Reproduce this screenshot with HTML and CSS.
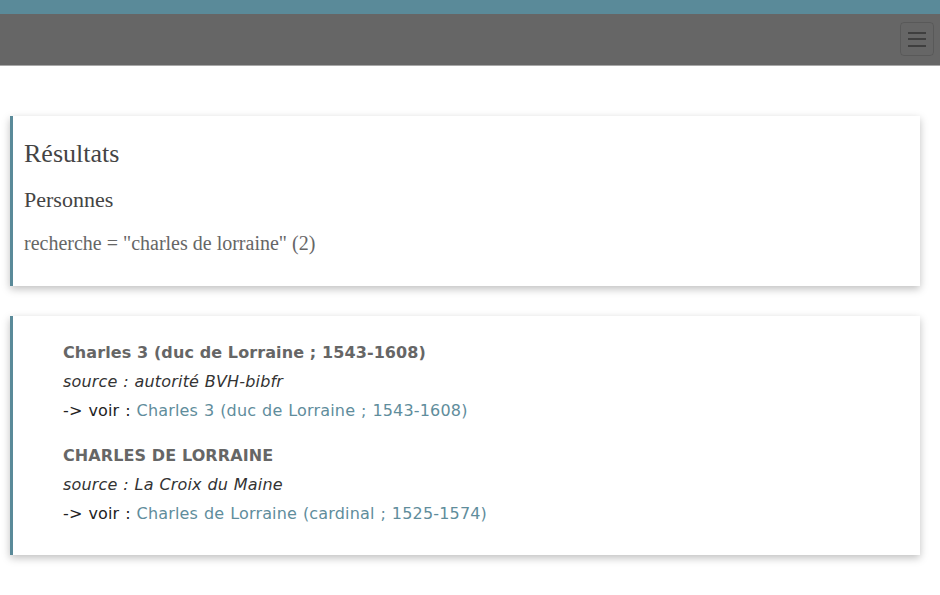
FILE: index.html
```html
<!DOCTYPE html>
<html lang="fr">
<head>
<meta charset="utf-8">
<title>Résultats</title>
<link rel="stylesheet" href="styles.css">
</head>
<body>
<div class="topbar"></div>
<nav class="navbar">
  <button class="toggler" aria-label="menu">
    <span class="bar"></span><span class="bar"></span><span class="bar"></span>
  </button>
</nav>
<main class="main">
  <section class="card card-head">
    <h1 class="title">Résultats</h1>
    <h2 class="subtitle">Personnes</h2>
    <p class="query">recherche = "charles de lorraine" (2)</p>
  </section>
  <section class="card card-list">
    <div class="entry">
      <div class="name">Charles 3 (duc de Lorraine ; 1543-1608)</div>
      <div class="source">source : autorité BVH-bibfr</div>
      <div class="see">-&gt; voir : <a class="link" href="#">Charles 3 (duc de Lorraine ; 1543-1608)</a></div>
    </div>
    <div class="entry">
      <div class="name">CHARLES DE LORRAINE</div>
      <div class="source">source : La Croix du Maine</div>
      <div class="see">-&gt; voir : <a class="link" href="#">Charles de Lorraine (cardinal ; 1525-1574)</a></div>
    </div>
  </section>
</main>
</body>
</html>
```
FILE: styles.css
```css
html, body {
  margin: 0;
  padding: 0;
  background: #ffffff;
}
body {
  font-family: "DejaVu Sans", Verdana, sans-serif;
  font-size: 16px;
  color: #222;
}
.topbar {
  height: 14px;
  background: #5a8a99;
}
.navbar {
  height: 51px;
  background: #666666;
  border-bottom: 1px solid #a8a8a8;
  display: flex;
  justify-content: flex-end;
  align-items: flex-start;
  padding-right: 6px;
}
.toggler {
  margin-top: 8px;
  width: 34px;
  height: 34px;
  padding: 0;
  background: transparent;
  border: 1px solid rgba(0, 0, 0, 0.12);
  border-radius: 4px;
  display: flex;
  flex-direction: column;
  align-items: center;
  justify-content: center;
  gap: 4.5px;
}
.bar {
  display: block;
  width: 18px;
  height: 2px;
  background: #3f3f3f;
}
.main {
  padding: 50px 20px 30px 10px;
  display: flex;
  flex-direction: column;
  gap: 30px;
}
.card {
  background: #fff;
  border-left: 3px solid #5a8a99;
  box-shadow: 0 3px 8px rgba(0, 0, 0, 0.25);
}
.card-head {
  padding: 22px 11px 31px;
  font-family: "Liberation Serif", "Times New Roman", serif;
}
.title {
  margin: 0;
  font-size: 26px;
  line-height: 31px;
  font-weight: normal;
  color: #444;
}
.subtitle {
  margin: 18px 0 0;
  font-size: 22px;
  line-height: 26px;
  font-weight: normal;
  color: #444;
}
.query {
  margin: 18px 0 0;
  font-size: 20px;
  line-height: 24px;
  color: #666;
}
.card-list {
  padding: 22px 20px 27px 50px;
  display: flex;
  flex-direction: column;
  gap: 16px;
}
.entry {
  line-height: 29px;
}
.name {
  font-weight: bold;
  color: #666;
  letter-spacing: 0.1px;
}
.source {
  font-style: italic;
  color: #333;
  letter-spacing: 0.17px;
  word-spacing: 0.5px;
}
.see {
  color: #222;
  letter-spacing: 0.17px;
  word-spacing: 0.6px;
}
.link {
  color: #5f8d9c;
  text-decoration: none;
}
```
